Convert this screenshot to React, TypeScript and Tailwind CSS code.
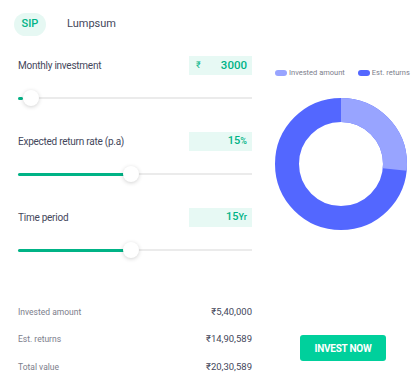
import React from "react";

const C = 2 * Math.PI * 54;
const frac = 540000 / 2030589;

function Slider({ pct, x }: { pct: number; x: number }) {
  return (
    <div className="relative h-[16px] w-[234px]">
      <div className="absolute left-0 right-0 top-[7px] h-[2px] bg-[#ebebeb]" />
      <div className="absolute left-0 top-[6.5px] h-[3px] bg-[#00b386] rounded-full" style={{ width: pct }} />
      <div
        className="absolute top-0 w-[16px] h-[16px] rounded-full bg-white shadow-[0_1px_4px_rgba(0,0,0,0.18)]"
        style={{ left: x - 8 }}
      />
    </div>
  );
}

function Row({ label, children }: { label: string; children: React.ReactNode }) {
  return (
    <div className="flex items-center justify-between h-[19px] w-[234px]">
      <span className="text-[10px] tracking-[-0.25px] text-[#44475b]">{label}</span>
      <div className="w-[63px] h-[19px] bg-[#e7f9f4] flex items-center justify-between px-[5px] text-[#00b386]">
        {children}
      </div>
    </div>
  );
}

export default function App() {
  return (
    <div className="w-[418px] h-[380px] bg-white flex font-['Roboto',sans-serif] overflow-hidden">
      <div className="w-[252px] pl-[18px] pt-[13px] flex flex-col shrink-0">
        <div className="flex items-center h-[23px] -ml-[4px]">
          <div className="w-[32px] h-[23px] rounded-full bg-[#e6f8f3] text-[#00b386] text-[11px] font-medium flex items-center justify-center">
            SIP
          </div>
          <span className="ml-[21px] text-[11px] text-[#44475b]">Lumpsum</span>
        </div>

        <div className="mt-[20px]">
          <Row label="Monthly investment">
            <span className="text-[9px] ml-[2px]">₹</span>
            <span className="text-[11.5px] font-medium">3000</span>
          </Row>
        </div>
        <div className="mt-[15px]">
          <Slider pct={5} x={13} />
        </div>

        <div className="mt-[26px]">
          <Row label="Expected return rate (p.a)">
            <span />
            <span className="text-[11px] font-medium">
              15<span className="text-[9px]">%</span>
            </span>
          </Row>
        </div>
        <div className="mt-[15px]">
          <Slider pct={107} x={113} />
        </div>

        <div className="mt-[26px]">
          <Row label="Time period">
            <span />
            <span className="text-[11px] font-medium">
              15<span className="text-[9px]">Yr</span>
            </span>
          </Row>
        </div>
        <div className="mt-[15px]">
          <Slider pct={107} x={113} />
        </div>

        <div className="mt-[46px] flex flex-col w-[234px]">
          <div className="flex justify-between items-center h-[16px]">
            <span className="text-[8.5px] text-[#7c7e8c]">Invested amount</span>
            <span className="text-[9.5px] text-[#44475b]">₹5,40,000</span>
          </div>
          <div className="flex justify-between items-center h-[16px] mt-[11.5px]">
            <span className="text-[8.5px] text-[#7c7e8c]">Est. returns</span>
            <span className="text-[9.5px] text-[#44475b]">₹14,90,589</span>
          </div>
          <div className="flex justify-between items-center h-[16px] mt-[11.5px]">
            <span className="text-[8.5px] text-[#7c7e8c]">Total value</span>
            <span className="text-[9.5px] text-[#44475b]">₹20,30,589</span>
          </div>
        </div>
      </div>

      <div className="flex-1 pl-[23px] pt-[68px] flex flex-col items-start">
        <div className="flex items-center h-[10px] text-[7.5px] text-[#7c7e8c] whitespace-nowrap shrink-0">
          <span className="w-[12px] h-[6px] rounded-full bg-[#98a4ff] mr-[2px] shrink-0" />
          <span>Invested amount</span>
          <span className="w-[12px] h-[6px] rounded-full bg-[#5367ff] ml-[13px] mr-[2px] shrink-0" />
          <span>Est. returns</span>
        </div>
        <svg width="132" height="132" viewBox="0 0 132 132" className="mt-[20px] shrink-0">
          <g transform="rotate(-90 66 66)">
            <circle cx="66" cy="66" r="54" fill="none" stroke="#5367ff" strokeWidth="24" />
            <circle
              cx="66"
              cy="66"
              r="54"
              fill="none"
              stroke="#98a4ff"
              strokeWidth="24"
              strokeDasharray={`${C * frac} ${C}`}
            />
          </g>
        </svg>
        <button className="mt-[105px] ml-[25px] w-[86px] h-[26px] rounded-[3px] bg-[#00d09c] text-white text-[10px] font-bold tracking-tight shrink-0">
          INVEST NOW
        </button>
      </div>
    </div>
  );
}
